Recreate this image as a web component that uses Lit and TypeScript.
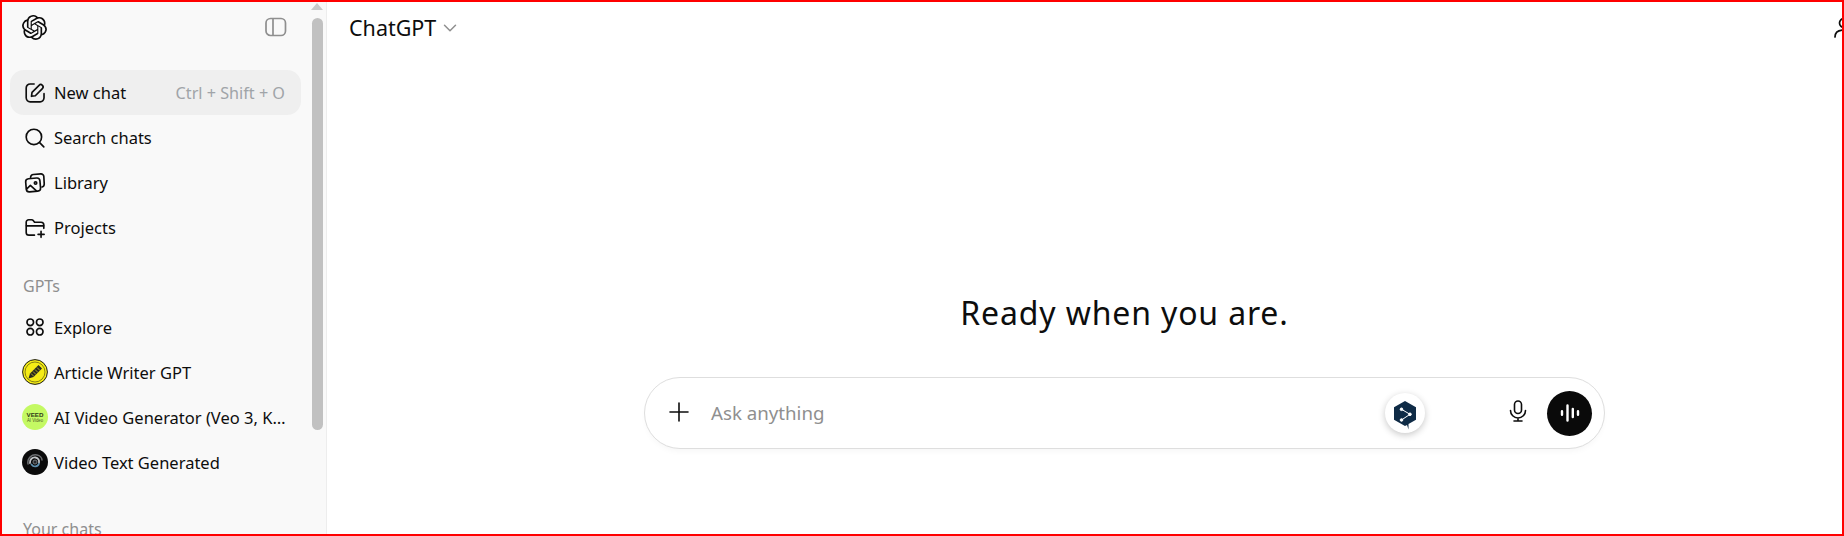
import { LitElement, html, css, svg } from "lit";
import { customElement } from "lit/decorators.js";

const stroke = (body: unknown, size = 22, vb = 20) => html`<svg width=${size} height=${size} viewBox="0 0 ${vb} ${vb}" fill="none" stroke="currentColor" stroke-width="1.5" stroke-linecap="round" stroke-linejoin="round">${body}</svg>`;

const logo = html`<svg width="25" height="25" viewBox="0 0 24 24" fill="#0d0d0d"><path d="M22.282 9.821a5.985 5.985 0 0 0-.516-4.91 6.046 6.046 0 0 0-6.51-2.9A6.065 6.065 0 0 0 4.981 4.18a5.985 5.985 0 0 0-3.998 2.9 6.046 6.046 0 0 0 .743 7.097 5.98 5.98 0 0 0 .51 4.911 6.051 6.051 0 0 0 6.515 2.9A5.985 5.985 0 0 0 13.26 24a6.056 6.056 0 0 0 5.772-4.206 5.99 5.99 0 0 0 3.997-2.9 6.056 6.056 0 0 0-.747-7.073zM13.26 22.43a4.476 4.476 0 0 1-2.876-1.04l.141-.081 4.779-2.758a.795.795 0 0 0 .392-.681v-6.737l2.02 1.168a.071.071 0 0 1 .038.052v5.583a4.504 4.504 0 0 1-4.494 4.494zM3.6 18.304a4.47 4.47 0 0 1-.535-3.014l.142.085 4.783 2.759a.771.771 0 0 0 .78 0l5.843-3.369v2.332a.08.08 0 0 1-.033.062L9.74 19.95a4.5 4.5 0 0 1-6.14-1.646zM2.34 7.896a4.485 4.485 0 0 1 2.366-1.973V11.6a.766.766 0 0 0 .388.676l5.815 3.355-2.02 1.168a.076.076 0 0 1-.071 0l-4.83-2.786A4.504 4.504 0 0 1 2.34 7.872zm16.597 3.855l-5.833-3.387L15.119 7.2a.076.076 0 0 1 .071 0l4.83 2.791a4.494 4.494 0 0 1-.676 8.105v-5.678a.79.79 0 0 0-.407-.667zm2.01-3.023l-.141-.085-4.774-2.782a.776.776 0 0 0-.785 0L9.409 9.23V6.897a.066.066 0 0 1 .028-.061l4.83-2.787a4.5 4.5 0 0 1 6.68 4.66zm-12.64 4.135l-2.02-1.164a.08.08 0 0 1-.038-.057V6.075a4.5 4.5 0 0 1 7.375-3.453l-.142.08L8.704 5.46a.795.795 0 0 0-.393.681zm1.097-2.365l2.602-1.5 2.607 1.5v2.999l-2.597 1.5-2.607-1.5z"/></svg>`;

const icons = {
  newChat: stroke(svg`<path d="M9.2 1.800H5.600A3.600 3.600 0 0 0 2 5.400v9A3.600 3.600 0 0 0 5.600 18h9a3.600 3.600 0 0 0 3.600-3.600v-3.800"/><path d="M6.800 13l.5-3.500L13.700 3a2.100 2.100 0 0 1 3 3l-6.400 6.500z"/>`),
  search: stroke(svg`<circle cx="9" cy="9" r="7"/><path d="M14.200 14.200l3.800 3.800"/>`),
  library: stroke(svg`<path d="M6 5V4.700A2.700 2.700 0 0 1 8.500 2.300l6.800-.6a2.500 2.500 0 0 1 2.700 2.300l.4 7a2.800 2.800 0 0 1-2 2.700"/><rect x="1.800" y="5.800" width="13" height="12" rx="2.800" transform="rotate(-5 8 12)"/><circle cx="10.500" cy="10" r="1.100"/><path d="M2.300 15.500l3.500-3.300 5.500 5"/>`),
  projects: stroke(svg`<path d="M9.500 16.500H4.500a2.500 2.500 0 0 1-2.500-2.500V4.800a2.300 2.300 0 0 1 2.300-2.300h2.500c.8 0 1.300.3 1.800 1l1 1.300h5.900a2.500 2.500 0 0 1 2.500 2.500v3"/><path d="M2.200 8h15.600"/><path d="M15.500 13v5.500M12.800 15.800h5.500"/>`),
  explore: stroke(svg`<circle cx="5.700" cy="5.700" r="3"/><circle cx="14.300" cy="5.700" r="3"/><circle cx="5.700" cy="14.300" r="3"/><circle cx="14.300" cy="14.300" r="3"/>`),
  panel: html`<svg width="22" height="20" viewBox="0 0 22 20" fill="none" stroke="#8f8f8f" stroke-width="1.700"><rect x="1" y="1.500" width="19.500" height="17" rx="4.500"/><path d="M8 1.500v17"/></svg>`,
  chevron: html`<svg width="14" height="8" viewBox="0 0 14 8" fill="none" stroke="#8f8f8f" stroke-width="1.500" stroke-linecap="round" stroke-linejoin="round"><path d="M1.500 1.200L7 6.700l5.500-5.500"/></svg>`,
  person: html`<svg width="22" height="24" viewBox="0 0 22 24" fill="none" stroke="#0d0d0d" stroke-width="1.700" stroke-linecap="round"><circle cx="11" cy="7" r="4.500"/><path d="M2 21c0-4.500 3.500-7 9-7"/></svg>`,
  plus: html`<svg width="20" height="20" viewBox="0 0 20 20" fill="none" stroke="#0d0d0d" stroke-width="1.600" stroke-linecap="round"><path d="M10 1v18M1 10h18"/></svg>`,
  mic: html`<svg width="18" height="22" viewBox="0 0 18 22" fill="none" stroke="#0d0d0d" stroke-width="1.600" stroke-linecap="round"><rect x="5.500" y="1" width="7" height="12.500" rx="3.500"/><path d="M1.500 10.500a7.500 7.500 0 0 0 15 0M9 18v3M5 21h8"/></svg>`,
  voice: html`<svg width="20" height="20" viewBox="0 0 20 20" fill="none" stroke="#fff" stroke-width="2.400" stroke-linecap="round"><path d="M2 8.200v3.600M7.500 2.500v15M12.800 6v8M18 8.200v3.600"/></svg>`,
  deepl: html`<svg width="24" height="29" viewBox="0 0 24 29"><path d="M12 0l11 6.300v12.500L15.500 23v5.500L14 24 12 25 1 18.800V6.300z" fill="#0f2b46"/><g stroke="#fff" stroke-width="1" fill="#fff"><path d="M8.500 8.300l8.500 5-8.500 5.700" fill="none"/><circle cx="8.500" cy="8.300" r="1.300"/><circle cx="17" cy="13.300" r="1.300"/><circle cx="8.500" cy="19" r="1.300"/></g></svg>`,
  article: html`<svg width="26" height="26" viewBox="0 0 26 26"><circle cx="13" cy="13" r="12.400" fill="#f5ec16" stroke="#1a1a1a" stroke-width="1"/><circle cx="13" cy="13" r="10" fill="none" stroke="#3d3b10" stroke-width=".6"/><path d="M6.500 19.500l1.500-5L16.500 6l3.500 3.500-8.500 8.500z" fill="#2a2a20"/><path d="M9 14.500l3 3M11 12.500l3 3M13 10.500l3 3M15 8.500l3 3" stroke="#cfc71e" stroke-width=".8"/></svg>`,
  veed: html`<svg width="26" height="26" viewBox="0 0 26 26" font-family="Liberation Sans, sans-serif" text-anchor="middle"><circle cx="13" cy="13" r="13" fill="#c4f963"/><text x="13" y="13" font-size="5.500" font-weight="700" fill="#2f3a18" textLength="17" lengthAdjust="spacingAndGlyphs">VEED</text><text x="13" y="18" font-size="4.500" fill="#4a5a2a" textLength="16" lengthAdjust="spacingAndGlyphs">AI Video</text></svg>`,
  swirl: html`<svg width="26" height="26" viewBox="0 0 26 26" fill="none"><circle cx="13" cy="13" r="13" fill="#0b0b0b"/><path d="M6 15c-1-6 4-10 9-9 3 .6 5 3 5 5" stroke="#6d6f72" stroke-width="1.500" stroke-linecap="round"/><path d="M8 14c-.5-3.500 2.500-6 5.500-5.500 2.500.4 4 2.500 3.500 5" stroke="#c2c5c8" stroke-width="1.800" stroke-linecap="round"/><path d="M9.500 15.500c2 3 6.500 2.500 7.500-1" stroke="#5e8fae" stroke-width="1.700" stroke-linecap="round"/><circle cx="13" cy="13" r="2" fill="#26282a" stroke="#8a8d90" stroke-width=".8"/></svg>`,
};

@customElement("app-root")
export class AppRoot extends LitElement {
  static styles = css`
    :host { display: block; }
    * { box-sizing: border-box; }
    .frame {
      display: flex; height: 536px; overflow: hidden;
      border: 2px solid #f00;
      font-family: "Noto Sans", "Open Sans", sans-serif; color: #0d0d0d; background: #fff;
    }
    .sidebar {
      flex: 0 0 325px; display: flex; background: #f9f9f9;
      border-right: 1px solid #ededed; overflow: hidden;
    }
    .nav { flex: 1; min-width: 0; padding: 0 11px 0 8px; }
    .top { height: 48px; margin-bottom: 20px; display: flex; align-items: center; justify-content: space-between; padding: 2px 14px 0 12px; }
    .row {
      height: 45px; display: flex; align-items: center; gap: 8px; padding: 0 16px 0 14px;
      font-size: 16.500px; border-radius: 14px; white-space: nowrap;
    }
    .row.active { background: #efefef; }
    .row svg { flex: none; display: block; }
    .row.avatar { padding-left: 12px; gap: 6px; padding-right: 12px; }
    .label { flex: 1; min-width: 0; overflow: hidden; text-overflow: ellipsis; }
    .keys { color: #a0a4a8; font-size: 16.200px; }
    .section { color: #8f8f8f; font-size: 16px; padding-left: 13px; line-height: 22px; }
    .gpts { margin-top: 25px; margin-bottom: 7.500px; }
    .chats { margin-top: 33.500px; }
    .scroll { flex: 0 0 16px; display: flex; flex-direction: column; align-items: center; padding-right: 2px; margin-left: -2px; }
    .arrow { width: 0; height: 0; border: 6px solid transparent; border-top: 0; border-bottom: 7px solid #c8c8c8; margin-top: 1px; }
    .thumb { width: 11px; height: 412px; margin-top: 8px; background: #c1c1c1; border-radius: 6px; }

    .main { flex: 1; min-width: 0; display: flex; flex-direction: column; overflow: hidden; }
    .header { height: 48px; flex: none; display: flex; align-items: center; justify-content: space-between; padding: 2px 0 0 22px; }
    .title { display: flex; align-items: center; gap: 7px; font-size: 21.500px; }
    .title svg { display: block; margin-top: 2px; }
    .person { margin-right: -13px; margin-top: 6px; display: block; }
    .hero { flex: 1; display: flex; flex-direction: column; align-items: center; padding: 241px 0 0 80px; }
    .hero h1 { margin: 0; font-weight: 400; font-size: 32px; letter-spacing: .85px; line-height: 44px; height: 44px; }
    .composer {
      width: 961px; height: 72px; margin-top: 42px; display: flex; align-items: center;
      border: 1px solid #dedede; border-radius: 36px; background: #fff;
      padding: 0 12px 0 24px; box-shadow: 0 4px 6px -2px rgba(0,0,0,.04);
    }
    .plus { display: block; flex: none; margin-top: 3px; }
    .ask { flex: 1; margin-left: 22px; margin-top: -2px; color: #8f8f8f; font-size: 18.700px; }
    .deepl { flex: none; width: 40px; height: 40px; border-radius: 50%; background: #fff; display: flex; align-items: center; justify-content: center; box-shadow: 0 2px 7px rgba(0,0,0,.22); margin-right: 84px; }
    .deepl svg { display: block; margin-top: 4px; }
    .mic { display: block; margin-right: 20px; }
    .send { flex: none; width: 45px; height: 45px; border-radius: 50%; background: #0a0a0a; display: flex; align-items: center; justify-content: center; }
  `;

  render() {
    return html`<div class="frame">
      <aside class="sidebar">
        <div class="nav">
          <div class="top">${logo}${icons.panel}</div>
          <div class="row active">${icons.newChat}<span class="label">New chat</span><span class="keys">Ctrl + Shift + O</span></div>
          <div class="row">${icons.search}<span class="label">Search chats</span></div>
          <div class="row">${icons.library}<span class="label">Library</span></div>
          <div class="row">${icons.projects}<span class="label">Projects</span></div>
          <div class="section gpts">GPTs</div>
          <div class="row">${icons.explore}<span class="label">Explore</span></div>
          <div class="row avatar">${icons.article}<span class="label">Article Writer GPT</span></div>
          <div class="row avatar">${icons.veed}<span class="label">AI Video Generator (Veo 3, Kling, Runway)</span></div>
          <div class="row avatar">${icons.swirl}<span class="label">Video Text Generated</span></div>
          <div class="section chats">Your chats</div>
        </div>
        <div class="scroll"><div class="arrow"></div><div class="thumb"></div></div>
      </aside>
      <main class="main">
        <header class="header">
          <div class="title">ChatGPT ${icons.chevron}</div>
          <div class="person">${icons.person}</div>
        </header>
        <section class="hero">
          <h1>Ready when you are.</h1>
          <div class="composer">
            <div class="plus">${icons.plus}</div>
            <div class="ask">Ask anything</div>
            <div class="deepl">${icons.deepl}</div>
            <div class="mic">${icons.mic}</div>
            <div class="send">${icons.voice}</div>
          </div>
        </section>
      </main>
    </div>`;
  }
}
